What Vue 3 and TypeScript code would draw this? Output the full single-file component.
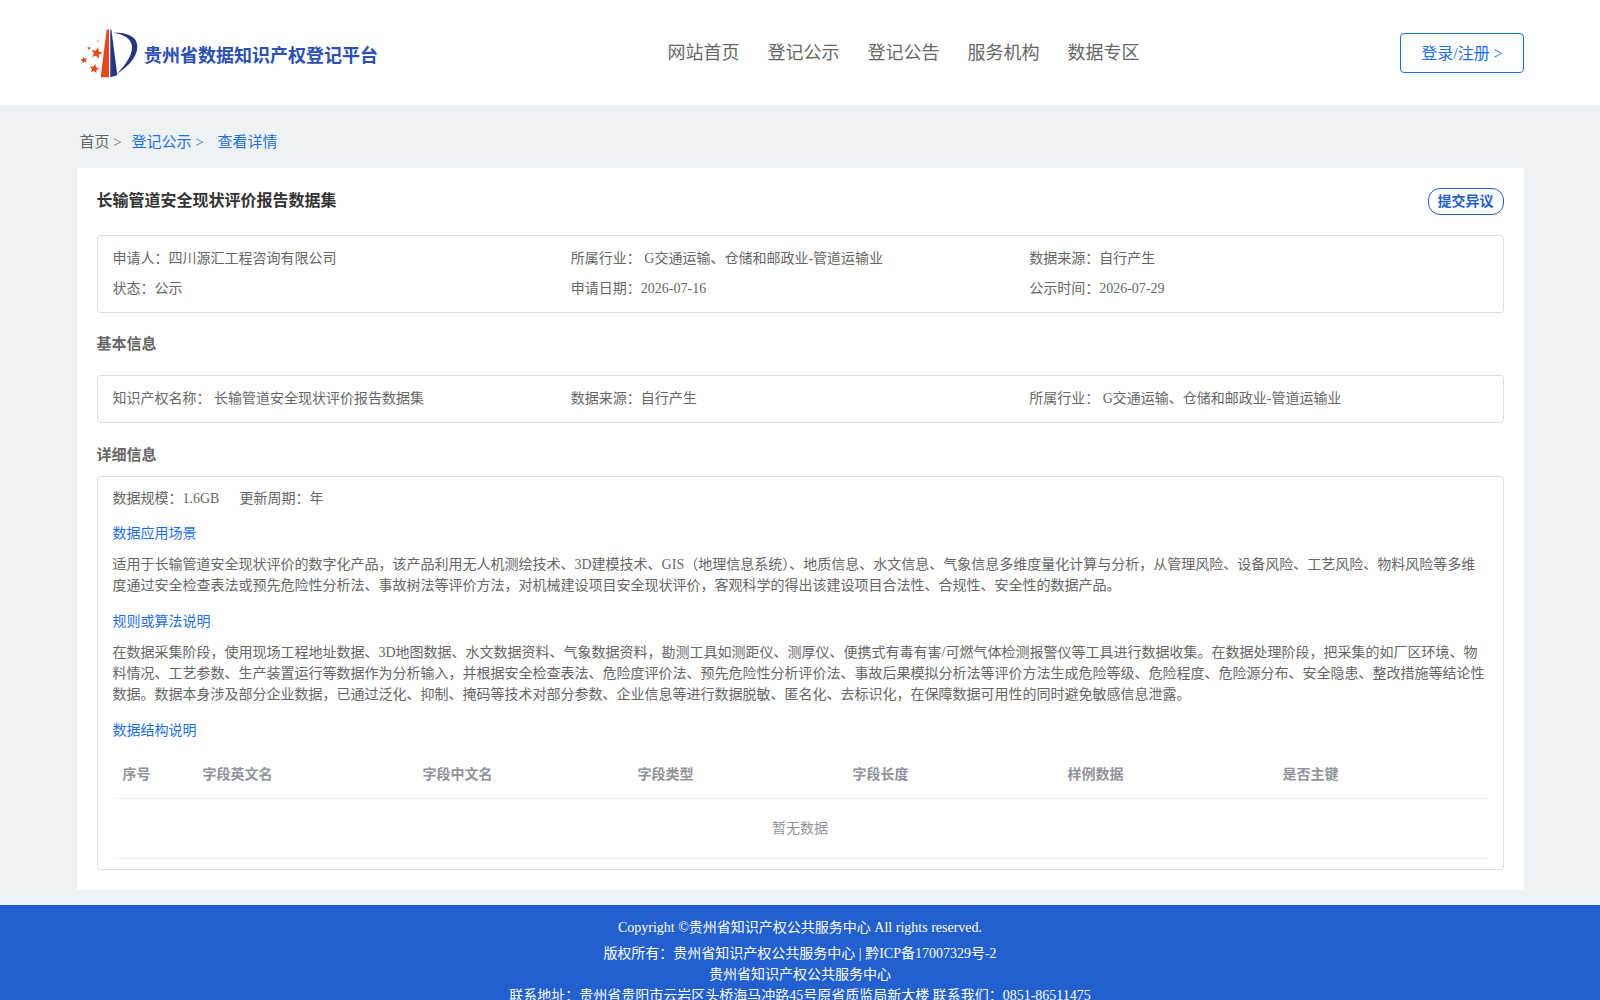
<template>
  <div class="page">
    <header class="top">
      <div class="brand">
        <svg class="logo" viewBox="60 50 180 155" aria-hidden="true">
          <polygon points="140,57 147,57 147,200 122,200" fill="#e8481c" />
          <polygon points="151,57 154,57 172,194 151,200" fill="#27347f" />
          <path d="M160 66 C205 66 232 80 232 108 C232 142 200 172 170 190 C196 164 216 136 216 110 C216 86 192 72 160 66 Z" fill="#27347f" />
          <polygon v-for="(s, i) in stars" :key="i" :points="s" fill="#e8481c" />
        </svg>
        <span class="brand-name">贵州省数据知识产权登记平台</span>
      </div>
      <nav class="nav">
        <a v-for="item in navItems" :key="item">{{ item }}</a>
      </nav>
      <button class="login">登录/注册 &gt;</button>
    </header>

    <main class="wrap">
      <div class="crumbs">
        <span class="crumb-home">首页 &gt;</span>
        <span class="crumb-link">登记公示 &gt;</span>
        <span class="crumb-now">查看详情</span>
      </div>

      <section class="card">
        <div class="title-row">
          <h1>长输管道安全现状评价报告数据集</h1>
          <button class="objection">提交异议</button>
        </div>

        <div class="box info-grid">
          <div v-for="cell in summary" :key="cell">{{ cell }}</div>
        </div>

        <h2 class="sec-a">基本信息</h2>
        <div class="box info-grid">
          <div v-for="cell in basics" :key="cell">{{ cell }}</div>
        </div>

        <h2 class="sec-b">详细信息</h2>
        <div class="box detail">
          <div class="meta">
            <span>数据规模：1.6GB</span>
            <span>更新周期：年</span>
          </div>

          <h3>数据应用场景</h3>
          <p>适用于长输管道安全现状评价的数字化产品，该产品利用无人机测绘技术、3D建模技术、GIS（地理信息系统）、地质信息、水文信息、气象信息多维度量化计算与分析，从管理风险、设备风险、工艺风险、物料风险等多维度通过安全检查表法或预先危险性分析法、事故树法等评价方法，对机械建设项目安全现状评价，客观科学的得出该建设项目合法性、合规性、安全性的数据产品。</p>

          <h3>规则或算法说明</h3>
          <p>在数据采集阶段，使用现场工程地址数据、3D地图数据、水文数据资料、气象数据资料，勘测工具如测距仪、测厚仪、便携式有毒有害/可燃气体检测报警仪等工具进行数据收集。在数据处理阶段，把采集的如厂区环境、物料情况、工艺参数、生产装置运行等数据作为分析输入，并根据安全检查表法、危险度评价法、预先危险性分析评价法、事故后果模拟分析法等评价方法生成危险等级、危险程度、危险源分布、安全隐患、整改措施等结论性数据。数据本身涉及部分企业数据，已通过泛化、抑制、掩码等技术对部分参数、企业信息等进行数据脱敏、匿名化、去标识化，在保障数据可用性的同时避免敏感信息泄露。</p>

          <h3>数据结构说明</h3>
          <div class="table">
            <div class="thead">
              <div v-for="col in columns" :key="col">{{ col }}</div>
            </div>
            <div class="empty">暂无数据</div>
          </div>
        </div>
      </section>
    </main>

    <footer class="foot">
      <div class="copy">Copyright ©贵州省知识产权公共服务中心 All rights reserved.</div>
      <div>版权所有：贵州省知识产权公共服务中心 | 黔ICP备17007329号-2</div>
      <div>贵州省知识产权公共服务中心</div>
      <div>联系地址：贵州省贵阳市云岩区头桥海马冲路45号原省质监局新大楼 联系我们：0851-86511475</div>
    </footer>
  </div>
</template>

<script setup lang="ts">
const navItems = ['网站首页', '登记公示', '登记公告', '服务机构', '数据专区']

const summary = [
  '申请人：四川源汇工程咨询有限公司',
  '所属行业： G交通运输、仓储和邮政业-管道运输业',
  '数据来源：自行产生',
  '状态：公示',
  '申请日期：2026-07-16',
  '公示时间：2026-07-29'
]

const basics = [
  '知识产权名称： 长输管道安全现状评价报告数据集',
  '数据来源：自行产生',
  '所属行业： G交通运输、仓储和邮政业-管道运输业'
]

const columns = ['序号', '字段英文名', '字段中文名', '字段类型', '字段长度', '样例数据', '是否主键']

// five-point star as polygon points
function star(cx: number, cy: number, r: number, rot: number): string {
  const pts: string[] = []
  for (let i = 0; i < 10; i++) {
    const rad = i % 2 === 0 ? r : r * 0.45
    const a = ((-90 + rot + i * 36) * Math.PI) / 180
    pts.push(`${(cx + rad * Math.cos(a)).toFixed(1)},${(cy + rad * Math.sin(a)).toFixed(1)}`)
  }
  return pts.join(' ')
}

const stars = [
  star(110, 128, 18, 15),
  star(72, 149, 11, -10),
  star(103, 175, 15, 10),
  star(87, 113, 6, 0),
  star(113, 92, 3, 0)
]
</script>

<style scoped>
.page {
  background: #eff2f5;
  color: #666;
  font-family: "Liberation Serif", "Noto Sans CJK SC", serif;
  font-size: 14px;
  line-height: 21px;
}

/* header */
.top {
  height: 105px;
  background: #fff;
  display: flex;
  align-items: center;
  justify-content: space-between;
  padding: 0 76px 0 80px;
}
.brand {
  display: flex;
  align-items: center;
  gap: 4px;
  width: 587.5px;
}
.logo {
  width: 60px;
  height: 52px;
}
.brand-name {
  font-size: 18px;
  font-weight: 700;
  color: #2b4fb3;
  padding-top: 7px;
}
.nav {
  flex: 1;
  display: flex;
  gap: 28px;
  font-size: 18px;
  color: #666;
  padding-top: 2px;
}
.login {
  width: 124px;
  height: 40px;
  padding: 2px 0 0;
  background: #fff;
  border: 1px solid #1d6fe8;
  border-radius: 4px;
  color: #1d6fe8;
  font: inherit;
  font-size: 16px;
}

/* breadcrumb */
.wrap {
  width: 1447px;
  margin: 0 auto;
}
.crumbs {
  height: 63px;
  padding: 27px 0 0 3px;
  box-sizing: border-box;
  display: flex;
  font-size: 15px;
  line-height: 21px;
}
.crumb-home { width: 52px; }
.crumb-link { width: 86px; color: #1d6fe8; }
.crumb-now { color: #1d6fe8; }

/* card */
.card {
  background: #fff;
  padding: 20px;
}
.title-row {
  display: flex;
  justify-content: space-between;
  align-items: center;
  margin-bottom: 20px;
}
h1 {
  margin: 0;
  padding-bottom: 2px;
  font-size: 16px;
  font-weight: 700;
  color: #333;
  line-height: 24px;
}
.objection {
  width: 76px;
  height: 27px;
  padding: 0;
  background: #fff;
  border: 1px solid #2060d0;
  border-radius: 12px;
  color: #2060d0;
  font: inherit;
  font-size: 14px;
  font-weight: 700;
}
.box {
  border: 1px solid #dcdfe6;
  border-radius: 4px;
  padding: 12px 15px 13px;
}
.info-grid {
  display: grid;
  grid-template-columns: repeat(3, 1fr);
  row-gap: 9px;
}
h2 {
  margin: 0;
  font-size: 15px;
  font-weight: 700;
  color: #666;
  line-height: 21px;
}
.sec-a { margin: 21px 0 20px; }
.sec-b { margin: 22px 0 10px; }

/* detail block */
.detail {
  padding: 11px 15px 10px;
}
.meta {
  display: flex;
  gap: 20px;
}
h3 {
  margin: 14px 0 10px;
  font-size: 14px;
  font-weight: 400;
  color: #1d6fe8;
  line-height: 21px;
}
p {
  margin: 0;
  line-height: 21px;
}
p + h3 {
  margin-top: 15px;
}

/* empty table */
.thead {
  display: grid;
  grid-template-columns: 80px 220px repeat(5, 215px);
  height: 47px;
  align-items: center;
  border-bottom: 1px solid #ebeef5;
  font-weight: 700;
  color: #909399;
}
.thead > div {
  padding-left: 10px;
}
.empty {
  height: 59px;
  display: flex;
  align-items: center;
  justify-content: center;
  border-bottom: 1px solid #ebeef5;
  color: #909399;
}

/* footer */
.foot {
  margin-top: 15px;
  background: #2260d0;
  color: #fff;
  text-align: center;
  padding: 12px 0 4px;
}
.copy {
  margin-bottom: 5px;
}
</style>

<style>
html, body {
  margin: 0;
}
</style>
